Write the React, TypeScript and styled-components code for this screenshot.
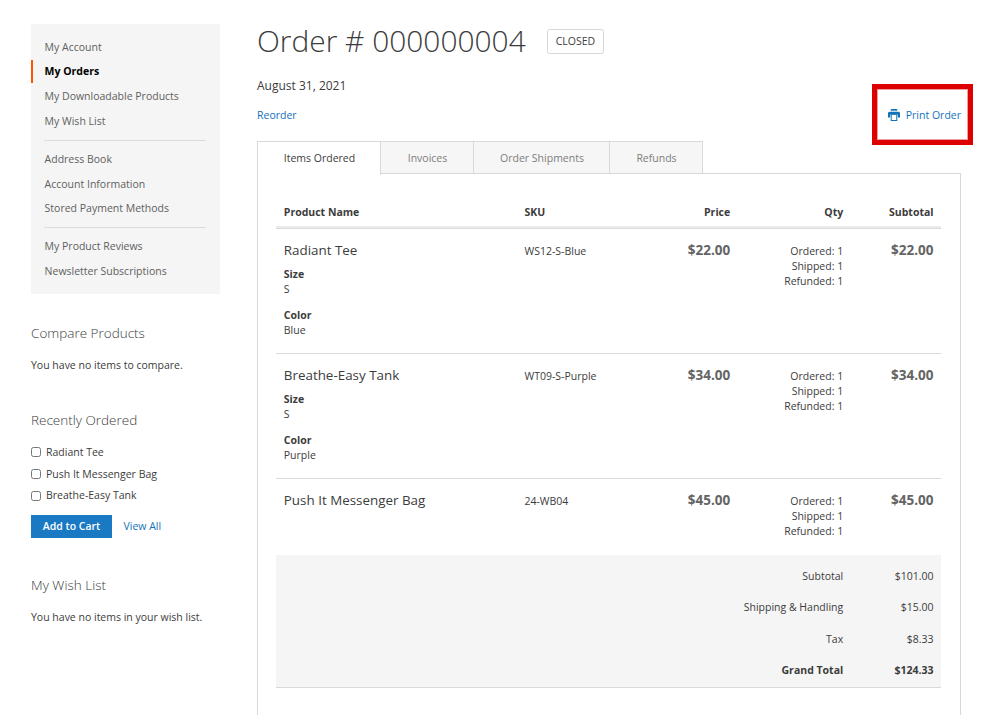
import React from "react";
import styled, { createGlobalStyle, css } from "styled-components";

const GlobalStyle = createGlobalStyle`
  * { box-sizing: border-box; }
  body {
    margin: 0;
    background: #fff;
    color: #3c3c3c;
    font-family: "Open Sans", "Noto Sans", sans-serif;
    font-size: 10.5px;
    line-height: 15px;
    overflow: hidden;
  }
  a { color: #1272b8; text-decoration: none; }
`;

const Page = styled.div`
  display: grid;
  grid-template-columns: 189px 704px;
  column-gap: 37px;
  height: 715px;
  padding: 24px 0 0 31px;
  overflow: hidden;
`;

const Sidebar = styled.aside`
  display: flex;
  flex-direction: column;
`;

const AccountNav = styled.nav`
  height: 270px;
  padding: 11.6px 0;
  background: #f5f5f5;
`;

const NavItem = styled.a<{ $current?: boolean }>`
  display: block;
  height: 22.5px;
  margin-bottom: 2.3px;
  padding-left: 13.6px;
  line-height: 22.5px;
  color: #606060;
  ${(p) =>
    p.$current &&
    css`
      padding-left: 11.6px;
      border-left: 2px solid #ff5501;
      color: #000;
      font-weight: 700;
    `}
`;

const NavDivider = styled.hr`
  height: 1px;
  margin: 7.5px 13.6px 6.9px 12.6px;
  border: 0;
  background: #dcdcdc;
`;

const Block = styled.section<{ $top: number }>`
  margin-top: ${(p) => p.$top}px;
`;

const BlockTitle = styled.h2<{ $gap?: number }>`
  margin: 0 0 ${(p) => p.$gap ?? 15}px;
  font-size: 13.5px;
  line-height: 20px;
  font-weight: 300;
`;

const Text = styled.p`
  margin: 0;
`;

const CheckRow = styled.label`
  display: flex;
  align-items: center;
  gap: 5px;
  height: 21.7px;
`;

const Checkbox = styled.input`
  width: 10px;
  height: 10px;
  margin: 0;
`;

const BlockActions = styled.div`
  display: flex;
  align-items: center;
  gap: 11.5px;
  margin-top: 8px;
`;

const CartButton = styled.button`
  width: 81px;
  height: 23px;
  padding: 0;
  border: 0;
  background: #1979c3;
  color: #fff;
  font: 600 10.5px/22px "Open Sans", "Noto Sans", sans-serif;
`;

const Main = styled.main`
  display: flex;
  flex-direction: column;
`;

const TitleRow = styled.header`
  display: flex;
  align-items: center;
  gap: 21.5px;
  height: 34px;
`;

const Title = styled.h1`
  margin: 0;
  font-size: 29.9px;
  line-height: 34px;
  font-weight: 300;
`;

const Status = styled.span`
  height: 25px;
  padding: 0 7.5px;
  border: 1.5px solid #d6d6d6;
  border-radius: 2.5px;
  line-height: 23px;
`;

const OrderDate = styled.div`
  margin-top: 19px;
  font-size: 12px;
  line-height: 18px;
`;

const Actions = styled.div`
  display: flex;
  justify-content: space-between;
  align-items: center;
  height: 18px;
  margin-top: 11px;
`;

const PrintLink = styled.a`
  position: relative;
  display: flex;
  align-items: center;
  gap: 6px;
`;

const Highlight = styled.span`
  position: absolute;
  inset: -24px -12px -22px -16px;
  border: 5px solid #dd0000;
  box-shadow: inset 0 0 0 1px #f0a0a0;
`;

const Tabs = styled.div`
  display: flex;
  height: 33px;
  margin-top: 17px;
`;

const Tab = styled.a<{ $width: number; $active?: boolean }>`
  width: ${(p) => p.$width}px;
  height: ${(p) => (p.$active ? 34 : 33)}px;
  padding-left: 1px;
  position: relative;
  border: 1px solid #d9d9d9;
  border-left-width: ${(p) => (p.$active ? 1 : 0)}px;
  border-bottom-width: ${(p) => (p.$active ? 0 : 1)}px;
  background: ${(p) => (p.$active ? "#fff" : "#f6f6f6")};
  color: ${(p) => (p.$active ? "#3c3c3c" : "#7d7d7d")};
  line-height: 32px;
  text-align: center;
`;

const Panel = styled.section`
  height: 560px;
  margin-top: -1px;
  padding: 22px 19px 0 18px;
  border: 1px solid #d9d9d9;
`;

const Table = styled.div`
  display: flex;
  flex-direction: column;
`;

const Row = styled.div<{ $height: number }>`
  display: grid;
  grid-template-columns: 240.7px 121px 100px 113px 1fr;
  height: ${(p) => p.$height}px;
  padding-top: 15px;
  & + & { border-top: 1px solid #d9d9d9; }
`;

const HeadRow = styled(Row)`
  padding-top: 9px;
  border-bottom: 2px solid #ececec;
  font-weight: 700;
`;

const Cell = styled.div<{ $right?: boolean }>`
  padding: 0 7.5px 0 7.8px;
  text-align: ${(p) => (p.$right ? "right" : "left")};
`;

const ProductName = styled.div`
  margin-top: -2.6px;
  font-size: 13.4px;
  line-height: 18px;
`;

const Options = styled.dl`
  margin: 7.3px 0 0;
  dt { font-weight: 700; line-height: 15.5px; }
  dd { margin: 0 0 10px; line-height: 15.5px; }
`;

const Price = styled.div`
  margin-top: -0.6px;
  font-size: 13.5px;
  line-height: 15px;
  font-weight: 700;
  color: #646464;
`;

const Qty = styled.div`
  line-height: 14.8px;
`;

const Totals = styled.div`
  height: 133px;
  padding-top: 6.4px;
  border-bottom: 1px solid #d9d9d9;
  background: #f5f5f5;
`;

const TotalRow = styled.div<{ $grand?: boolean }>`
  display: grid;
  grid-template-columns: 1fr 90.3px;
  height: 31.4px;
  line-height: 31.4px;
  font-weight: ${(p) => (p.$grand ? 700 : 400)};
`;

const PrinterIcon = () => (
  <svg width="12" height="12" viewBox="0 0 12 12" fill="#1272b8">
    <path d="M2.8 0h6.4v1.7H2.8z" />
    <path d="M1.5 2.8h9Q12 2.8 12 4.3V8.6H9.8V5.4H2.2v3.2H0V4.3Q0 2.8 1.5 2.8z" />
    <path fillRule="evenodd" d="M2.7 5.3h6.6V12H2.7zM3.7 6v5h4.6V6z" />
  </svg>
);

const navGroups = [
  ["My Account", "My Orders", "My Downloadable Products", "My Wish List"],
  ["Address Book", "Account Information", "Stored Payment Methods"],
  ["My Product Reviews", "Newsletter Subscriptions"],
];

const recent = ["Radiant Tee", "Push It Messenger Bag", "Breathe-Easy Tank"];

const tabs = [
  { label: "Items Ordered", width: 124, active: true },
  { label: "Invoices", width: 93 },
  { label: "Order Shipments", width: 136 },
  { label: "Refunds", width: 93 },
];

const items = [
  { name: "Radiant Tee", sku: "WS12-S-Blue", price: "$22.00", size: "S", color: "Blue", height: 125 },
  { name: "Breathe-Easy Tank", sku: "WT09-S-Purple", price: "$34.00", size: "S", color: "Purple", height: 125 },
  { name: "Push It Messenger Bag", sku: "24-WB04", price: "$45.00", height: 76.5 },
];

const totals = [
  ["Subtotal", "$101.00"],
  ["Shipping & Handling", "$15.00"],
  ["Tax", "$8.33"],
  ["Grand Total", "$124.33"],
];

export default function App() {
  return (
    <>
      <GlobalStyle />
      <Page>
        <Sidebar>
          <AccountNav>
            {navGroups.map((group, i) => (
              <React.Fragment key={i}>
                {i > 0 && <NavDivider />}
                {group.map((label) => (
                  <NavItem key={label} $current={label === "My Orders"}>{label}</NavItem>
                ))}
              </React.Fragment>
            ))}
          </AccountNav>
          <Block $top={29.4}>
            <BlockTitle>Compare Products</BlockTitle>
            <Text>You have no items to compare.</Text>
          </Block>
          <Block $top={36.6}>
            <BlockTitle $gap={11.5}>Recently Ordered</BlockTitle>
            {recent.map((name) => (
              <CheckRow key={name}>
                <Checkbox type="checkbox" />
                {name}
              </CheckRow>
            ))}
            <BlockActions>
              <CartButton>Add to Cart</CartButton>
              <a>View All</a>
            </BlockActions>
          </Block>
          <Block $top={37.5}>
            <BlockTitle>My Wish List</BlockTitle>
            <Text>You have no items in your wish list.</Text>
          </Block>
        </Sidebar>
        <Main>
          <TitleRow>
            <Title>Order # 000000004</Title>
            <Status>CLOSED</Status>
          </TitleRow>
          <OrderDate>August 31, 2021</OrderDate>
          <Actions>
            <a>Reorder</a>
            <PrintLink>
              <PrinterIcon />
              Print Order
              <Highlight />
            </PrintLink>
          </Actions>
          <Tabs>
            {tabs.map((t) => (
              <Tab key={t.label} $width={t.width} $active={t.active}>{t.label}</Tab>
            ))}
          </Tabs>
          <Panel>
            <Table>
              <HeadRow $height={32}>
                <Cell>Product Name</Cell>
                <Cell>SKU</Cell>
                <Cell $right>Price</Cell>
                <Cell $right>Qty</Cell>
                <Cell $right>Subtotal</Cell>
              </HeadRow>
              {items.map((item) => (
                <Row key={item.name} $height={item.height}>
                  <Cell>
                    <ProductName>{item.name}</ProductName>
                    {item.size && (
                      <Options>
                        <dt>Size</dt>
                        <dd>{item.size}</dd>
                        <dt>Color</dt>
                        <dd>{item.color}</dd>
                      </Options>
                    )}
                  </Cell>
                  <Cell>{item.sku}</Cell>
                  <Cell $right><Price>{item.price}</Price></Cell>
                  <Cell $right>
                    <Qty>Ordered: 1</Qty>
                    <Qty>Shipped: 1</Qty>
                    <Qty>Refunded: 1</Qty>
                  </Cell>
                  <Cell $right><Price>{item.price}</Price></Cell>
                </Row>
              ))}
              <Totals>
                {totals.map(([label, value]) => (
                  <TotalRow key={label} $grand={label === "Grand Total"}>
                    <Cell $right>{label}</Cell>
                    <Cell $right>{value}</Cell>
                  </TotalRow>
                ))}
              </Totals>
            </Table>
          </Panel>
        </Main>
      </Page>
    </>
  );
}
